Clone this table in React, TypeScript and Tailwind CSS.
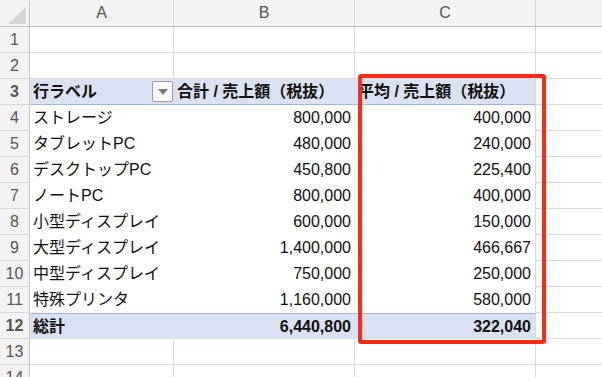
import type { ReactNode } from 'react';

type PivotRow = { label: string; sum: string; avg: string };

const ROWS: PivotRow[] = [
  { label: 'ストレージ', sum: '800,000', avg: '400,000' },
  { label: 'タブレットPC', sum: '480,000', avg: '240,000' },
  { label: 'デスクトップPC', sum: '450,800', avg: '225,400' },
  { label: 'ノートPC', sum: '800,000', avg: '400,000' },
  { label: '小型ディスプレイ', sum: '600,000', avg: '150,000' },
  { label: '大型ディスプレイ', sum: '1,400,000', avg: '466,667' },
  { label: '中型ディスプレイ', sum: '750,000', avg: '250,000' },
  { label: '特殊プリンタ', sum: '1,160,000', avg: '580,000' },
];

const FONT = 'font-["Liberation_Sans","Noto_Sans_CJK_JP",sans-serif]';

function RowHead({ n }: { n: number }) {
  return (
    <div className="w-[30px] shrink-0 h-full flex items-center justify-center bg-[#f3f3f3] border-r border-r-[#c4c4c4] border-b border-b-[#d6d6d6] text-[16px] text-[#555]">
      {n}
    </div>
  );
}

function Cell({
  w,
  className = '',
  children,
}: {
  w: string;
  className?: string;
  children?: ReactNode;
}) {
  return (
    <div className={`${w} shrink-0 h-full flex items-center ${className}`}>
      {children}
    </div>
  );
}

// plain empty grid row (rows 1, 2, 13, 14)
function EmptyRow({ n }: { n: number }) {
  return (
    <div className="flex h-[26px]">
      <RowHead n={n} />
      <Cell w="w-[144px]" className="border-r border-b border-[#d9d9d9]" />
      <Cell w="w-[181px]" className="border-r border-b border-[#d9d9d9]" />
      <Cell w="w-[181px]" className="border-r border-b border-[#d9d9d9]" />
      <Cell w="flex-1" className="border-b border-[#d9d9d9]" />
    </div>
  );
}

function DropButton() {
  return (
    <div className="w-[21px] h-[21px] mr-[1px] flex items-center justify-center border border-[#9c9c9c] bg-[#f8f8f8] rounded-[2px]">
      <svg width="10" height="6" viewBox="0 0 10 6">
        <path d="M0 0 L10 0 L5 6 Z" fill="#7b7b7b" />
      </svg>
    </div>
  );
}

export default function App() {
  return (
    <div className={`relative w-[602px] h-[377px] overflow-hidden bg-white text-[16px] text-[#111] ${FONT}`}>
      {/* column headers */}
      <div className="flex h-[27px] bg-[#f3f3f3] border-b border-[#bdbdbd] text-[16px] text-[#555]">
        <div className="w-[30px] shrink-0 h-full border-r border-[#c4c4c4] relative">
          <svg className="absolute left-0 top-0" width="29" height="26" viewBox="0 0 29 26">
            <path d="M8 24 L26 24 L26 7 Z" fill="#d5d5d5" />
          </svg>
        </div>
        <Cell w="w-[144px]" className="justify-center border-r border-[#d4d4d4]">A</Cell>
        <Cell w="w-[181px]" className="justify-center border-r border-[#d4d4d4]">B</Cell>
        <Cell w="w-[181px]" className="justify-center border-r border-[#d4d4d4]">C</Cell>
        <Cell w="flex-1" />
      </div>

      <EmptyRow n={1} />
      <EmptyRow n={2} />

      {/* pivot header */}
      <div className="flex h-[26px] font-bold">
        <RowHead n={3} />
        <Cell w="w-[144px]" className="bg-[#d9e1f2] border-b border-[#9fb4de] justify-between pl-[3px]">
          <span>行ラベル</span>
          <DropButton />
        </Cell>
        <Cell w="w-[181px]" className="bg-[#d9e1f2] border-b border-[#9fb4de] pl-[3px]">
          合計 / 売上額（税抜）
        </Cell>
        <Cell w="w-[181px]" className="bg-[#d9e1f2] border-b border-b-[#9fb4de] border-r border-r-[#d9d9d9] pl-[3px]">
          平均 / 売上額（税抜）
        </Cell>
        <Cell w="flex-1" className="border-b border-[#d9d9d9]" />
      </div>

      {ROWS.map((r, i) => (
        <div key={r.label} className="flex h-[26px]">
          <RowHead n={i + 4} />
          <Cell w="w-[144px]" className="pl-[3px] whitespace-nowrap">{r.label}</Cell>
          <Cell w="w-[181px]" className="justify-end pr-[4px]">{r.sum}</Cell>
          <Cell w="w-[181px]" className="justify-end pr-[4px] border-r border-[#d9d9d9]">{r.avg}</Cell>
          <Cell w="flex-1" className="border-b border-[#d9d9d9]" />
        </div>
      ))}

      {/* grand total */}
      <div className="flex h-[26px] font-bold">
        <RowHead n={12} />
        <Cell w="w-[144px]" className="bg-[#d9e1f2] border-t border-[#9fb4de] pl-[3px]">総計</Cell>
        <Cell w="w-[181px]" className="bg-[#d9e1f2] border-t border-[#9fb4de] justify-end pr-[4px]">6,440,800</Cell>
        <Cell w="w-[181px]" className="bg-[#d9e1f2] border-t border-t-[#9fb4de] border-r border-r-[#d9d9d9] justify-end pr-[4px]">322,040</Cell>
        <Cell w="flex-1" className="border-b border-[#d9d9d9]" />
      </div>

      <EmptyRow n={13} />
      <EmptyRow n={14} />

      {/* highlight box over column C */}
      <div className="absolute left-[358px] top-[74px] w-[188px] h-[270px] border-[4px] border-[#fd2a17] rounded-[3px]" />
    </div>
  );
}
